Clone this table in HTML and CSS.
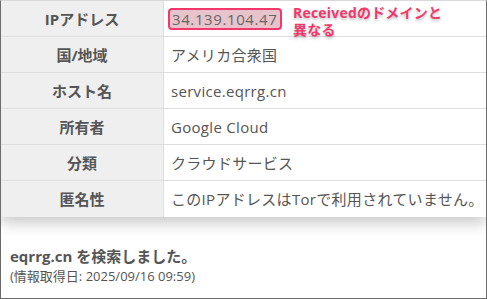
FILE: index.html
```html
<!DOCTYPE html>
<html lang="ja">
<head>
<meta charset="utf-8">
<link rel="stylesheet" href="styles.css">
</head>
<body>
<div class="frame">
  <table class="info">
    <tr><th>IPアドレス</th><td class="ip-cell"><span class="ip">34.139.104.47</span><span class="note">Receivedのドメインと<br>異なる</span></td></tr>
    <tr><th>国/地域</th><td>アメリカ合衆国</td></tr>
    <tr><th>ホスト名</th><td>service.eqrrg.cn</td></tr>
    <tr><th>所有者</th><td>Google Cloud</td></tr>
    <tr><th>分類</th><td>クラウドサービス</td></tr>
    <tr><th>匿名性</th><td>このIPアドレスはTorで利用されていません。</td></tr>
  </table>
  <div class="footer">
    <p class="searched">eqrrg.cn を検索しました。</p>
    <p class="date">(情報取得日: 2025/09/16 09:59)</p>
  </div>
</div>
</body>
</html>
```
FILE: styles.css
```css
html, body {
  margin: 0;
  padding: 0;
  background: #fff;
}
.frame {
  box-sizing: border-box;
  width: 487px;
  height: 299px;
  border: 1px solid #6b6b6b;
  border-top-color: #d8d8d8;
  font-family: "Open Sans", "Noto Sans CJK JP", sans-serif;
  color: #555;
  overflow: hidden;
}
.info {
  width: 100%;
  border-collapse: collapse;
  box-shadow: 0 6px 14px rgba(0, 0, 0, 0.22);
}
.info th, .info td {
  height: 35px;
  border-bottom: 1px solid #dedede;
  padding: 0;
  font-size: 15px;
  line-height: 20px;
}
.info tr:last-child th, .info tr:last-child td {
  border-bottom: none;
  height: 36px;
}
.info th {
  width: 162px;
  background: #efefef;
  border-right: 1px solid #dedede;
  font-weight: bold;
  text-align: center;
  color: #555;
}
.info td {
  background: #fff;
  padding-left: 7px;
  text-align: left;
  letter-spacing: 0.3px;
}
.ip-cell {
  position: relative;
}
.ip {
  display: inline-block;
  vertical-align: middle;
  padding: 1px 3px 1px 2px;
  margin-left: -3px;
  border: 2px solid #f2386b;
  border-radius: 4px;
  background: #e7c3cb;
  color: #666;
  letter-spacing: 0.6px;
  line-height: 16px;
}
.note {
  position: absolute;
  left: 129px;
  top: 3px;
  font-size: 14px;
  line-height: 17px;
  font-weight: bold;
  color: #f2386b;
  text-shadow: 0 2px 3px rgba(0, 0, 0, 0.25);
  letter-spacing: 0.2px;
}
.footer {
  padding: 29px 0 0 9px;
}
.footer p {
  margin: 0;
}
.searched {
  font-size: 15px;
  font-weight: bold;
  line-height: 21px;
  color: #555;
}
.date {
  font-size: 13px;
  line-height: 18px;
  color: #555;
}
```
